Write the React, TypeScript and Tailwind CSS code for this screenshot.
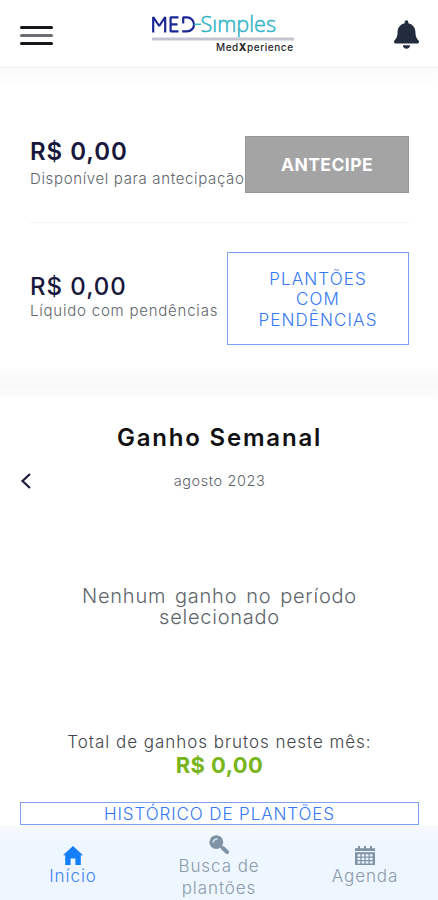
import type { ReactNode } from "react";
import { FaBell } from "react-icons/fa";

function Logo() {
    return (
        <svg width="146" height="44" viewBox="0 0 146 44" role="img" aria-label="MED-Simples MedXperience">
            <g fill="none" stroke="#1b2794" strokeWidth="2.2" strokeLinejoin="bevel">
                <path d="M3.2 22.5V7L9.2 16L15.2 7V22.5" />
                <path d="M28.5 7.4H20.6V21.4H28.5M20.6 14.3H27.5" />
                <path d="M33.2 13.5V7.4H37A7 7 0 0 1 37 21.4H32.2" />
            </g>
            <path d="M43.8 14.3H51" fill="none" stroke="#32b4c6" strokeWidth="1.5" />
            <text
                x="50.5"
                y="22"
                textLength="75.5"
                lengthAdjust="spacingAndGlyphs"
                className="fill-[#32b4c6] font-['Open_Sans'] text-[21.5px] font-light"
                stroke="#32b4c6"
                strokeWidth="0.5"
            >
                Sımples
            </text>
            <rect x="2" y="27.5" width="142" height="3" fill="#c2c5d0" />
            <text x="66" y="40.5" textLength="77" className="fill-[#26262c] font-['Inter'] text-[10px] font-medium">
                Med<tspan fontWeight="800">X</tspan>perience
            </text>
        </svg>
    );
}

function NavItem({ icon, children, className }: { icon: ReactNode; children: ReactNode; className: string }) {
    return (
        <button
            className={`flex flex-1 flex-col items-center text-[17px] leading-[22px] font-light tracking-[0.055em] ${className}`}
        >
            {icon}
            {children}
        </button>
    );
}

export default function App() {
    return (
        <div className="flex h-[900px] w-full flex-col overflow-hidden bg-white font-['Inter',sans-serif] text-[#60656b]">
            <header className="flex h-[68px] shrink-0 items-start justify-between border-b border-[#edf0f2] pr-[19px] pl-5">
                <button className="mt-[26px] flex w-[33px] flex-col gap-[5.5px]" aria-label="Menu">
                    <span className="h-[2.5px] w-full rounded-full bg-[#17181c]" />
                    <span className="h-[2.5px] w-full rounded-full bg-[#6b6d70]" />
                    <span className="h-[2.5px] w-full rounded-full bg-[#17181c]" />
                </button>
                <div className="mt-[10px] -ml-[2px]">
                    <Logo />
                </div>
                <FaBell className="mt-[20px] h-[29px] w-[25px] text-[#232b3e]" />
            </header>
            <div className="h-[20px] shrink-0 bg-gradient-to-b from-[#fafafa] to-white" />

            <section className="flex h-[284px] shrink-0 flex-col pr-[29px] pl-[30px]">
                <div className="flex h-[135px] items-start justify-between border-b border-[#f3f3f3]">
                    <div className="mt-[48px] whitespace-nowrap">
                        <p className="text-[24px] leading-[32px] font-semibold tracking-[0.04em] text-[#18183c]">R$ 0,00</p>
                        <p className="text-[15px] leading-[21px] font-light tracking-[0.043em]">Disponível para antecipação</p>
                    </div>
                    <button className="mt-[48px] -ml-1 h-[57px] w-[164px] shrink-0 border border-[#979797] bg-[#a4a4a4] pt-px text-[17.5px] font-bold tracking-[0.025em] text-white">
                        ANTECIPE
                    </button>
                </div>
                <div className="flex items-start justify-between">
                    <div className="mt-[47px] whitespace-nowrap">
                        <p className="text-[24px] leading-[34px] font-medium tracking-[0.04em] text-[#18183c]">R$ 0,00</p>
                        <p className="text-[15px] leading-[14px] font-light tracking-[0.052em]">Líquido com pendências</p>
                    </div>
                    <button className="mt-[29px] h-[93px] w-[182px] border border-[#7d9ff0] px-6 pt-[2px] text-[17px] leading-[20.5px] font-light tracking-[0.065em] text-[#3478f6]">
                        PLANTÕES COM PENDÊNCIAS
                    </button>
                </div>
            </section>
            <div className="h-[24px] shrink-0 bg-gradient-to-b from-[#fcfcfc] via-[#f9f9f9] to-[#fcfcfc]" />

            <main className="flex min-h-0 flex-1 flex-col pr-[19px] pl-5 text-center">
                <h1 className="mt-[27px] text-[24px] leading-[30px] font-semibold tracking-[0.075em] text-[#101012]">Ganho Semanal</h1>
                <div className="relative mt-[18px]">
                    <button className="absolute top-px -left-px" aria-label="Mês anterior">
                        <svg width="14" height="18" viewBox="0 0 14 18" fill="none" stroke="#1c1c3c" strokeWidth="2.2">
                            <path d="M11 2L3.5 9L11 16" />
                        </svg>
                    </button>
                    <p className="text-[14.5px] leading-[20px] font-light tracking-[0.04em]">agosto 2023</p>
                </div>
                <p className="mx-auto mt-[95px] w-[300px] text-[20px] leading-[21px] font-light tracking-[0.038em] [word-spacing:2.5px]">
                    Nenhum ganho no período selecionado
                </p>
                <p className="mt-[102px] text-[17px] leading-[24px] font-light tracking-[0.057em] whitespace-nowrap text-[#42464b]">
                    Total de ganhos brutos neste mês:
                </p>
                <p className="text-[22px] leading-[22px] font-bold tracking-[0.02em] text-[#79b51c]">R$ 0,00</p>
                <button className="mt-[26px] h-[23px] shrink-0 border border-[#7d9ff0] pt-px text-[17px] leading-[20px] font-light tracking-[0.053em] text-[#3478f6]">
                    HISTÓRICO DE PLANTÕES
                </button>
            </main>

            <nav className="flex h-[74px] shrink-0 items-start bg-gradient-to-b from-[#f6f9fb] to-[#eef6ff] to-25% text-[#8b9bab]">
                <NavItem
                    className="pt-[20px] text-[#3d83f6]"
                    icon={
                        <svg width="20" height="19" viewBox="0 0 20 19" fill="#147efb">
                            <path d="M10 0L20 9.3H17.8V19H12.4V12.5H7.6V19H2.2V9.3H0Z" />
                        </svg>
                    }
                >
                    Início
                </NavItem>
                <NavItem
                    className="pt-[9px]"
                    icon={
                        <svg className="mb-px" width="20" height="19" viewBox="0 0 20 19" fill="none">
                            <path d="M11.5 11.5L14 13.5" stroke="#7f93a7" strokeWidth="2" />
                            <path d="M14 13.2L18 17" stroke="#7f93a7" strokeWidth="4" strokeLinecap="round" />
                            <circle cx="7.3" cy="7.2" r="6.9" fill="#7f93a7" />
                            <path d="M4.2 7.6A3.4 3.4 0 0 1 8.6 4.2" stroke="#d5e0ea" strokeWidth="1.6" />
                        </svg>
                    }
                >
                    <span>Busca de</span>
                    <span>plantões</span>
                </NavItem>
                <NavItem
                    className="pt-[20px]"
                    icon={
                        <svg width="20" height="19" viewBox="0 0 20 19" fill="#7f93a7">
                            <path d="M0 2.2H3V0H5V2.2H9V0H11V2.2H15V0H17V2.2H20V5H0Z" />
                            <path d="M0 6.2H20V19H0Z" />
                            <path
                                d="M2.5 9.3H18M2.5 12.8H18M2.5 16.3H18"
                                stroke="#eef6ff"
                                strokeWidth="2.2"
                                strokeDasharray="2.8 1.3"
                            />
                        </svg>
                    }
                >
                    Agenda
                </NavItem>
            </nav>
        </div>
    );
}
